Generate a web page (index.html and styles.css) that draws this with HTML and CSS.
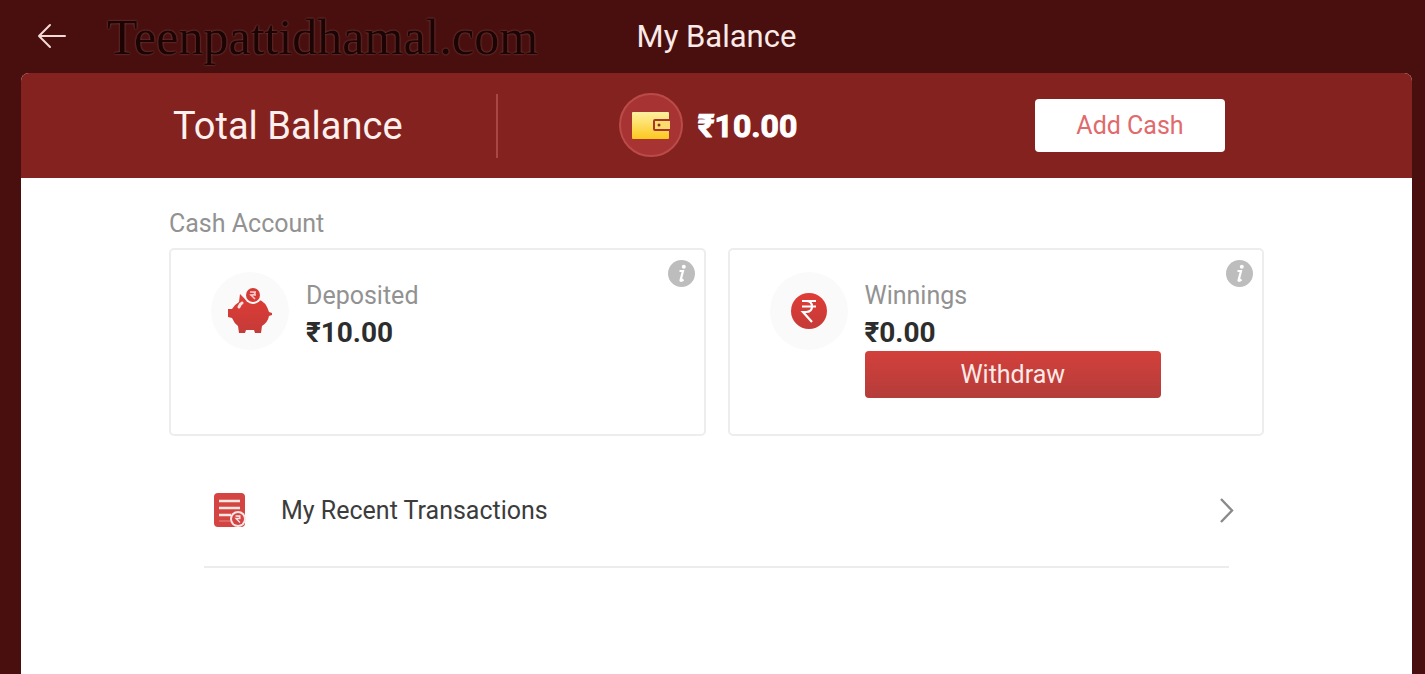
FILE: index.html
```html
<!DOCTYPE html>
<html lang="en">
<head>
    <meta charset="UTF-8">
    <meta name="viewport" content="width=device-width, initial-scale=1.0">
    <title>My Balance</title>
    <link rel="stylesheet" href="styles.css">
</head>
<body>
    <header class="topbar">
        <div class="topbar-left">
            <button class="back" type="button" aria-label="Back">
                <svg width="30" height="28" viewBox="0 0 30 28" fill="none" stroke="#f3d9d6" stroke-width="2" stroke-linecap="round" stroke-linejoin="round">
                    <path d="M28 13H2M13 2L2 13l11 11"/>
                </svg>
            </button>
            <span class="site">Teenpattidhamal.com</span>
        </div>
        <h1>My Balance</h1>
    </header>

    <main class="panel">
        <section class="total">
            <h2 class="total-label">Total Balance</h2>
            <div class="total-amount">
                <svg width="66" height="66" viewBox="0 0 66 66">
                    <defs>
                        <linearGradient id="gold" x1="0" y1="0" x2="0" y2="1">
                            <stop offset="0" stop-color="#fff0a0"/>
                            <stop offset="1" stop-color="#fcc81e"/>
                        </linearGradient>
                    </defs>
                    <circle cx="33" cy="32" r="31" fill="#a73332" stroke="#bb4b49" stroke-width="2"/>
                    <path d="M15 19h35a1 1 0 0 1 1 1v6H37a2 2 0 0 0-2 2v8a2 2 0 0 0 2 2h14v7a1 1 0 0 1-1 1H15a1 1 0 0 1-1-1V20a1 1 0 0 1 1-1z" fill="url(#gold)"/>
                    <path d="M37 28h15v8H37z" fill="#fddc6e"/>
                    <circle cx="41" cy="32" r="1.500" fill="#8c3422"/>
                </svg>
                <span>₹10.00</span>
            </div>
            <button class="add-cash" type="button">Add Cash</button>
        </section>

        <section class="content">
            <h3>Cash Account</h3>
            <div class="cards">
                <article class="card">
                    <div class="card-icon">
                        <svg width="46" height="48" viewBox="0 0 46 48">
                            <defs>
                                <linearGradient id="red" x1="0" y1="0" x2="0" y2="1">
                                    <stop offset="0" stop-color="#e03c36"/>
                                    <stop offset="1" stop-color="#c43b38"/>
                                </linearGradient>
                            </defs>
                            <path d="M13 7l6 6q3-1 8-1 9 0 13 8 1 2 2 5l3 1v2l-3 1q-1 6-7 10l-1 7h-6l-1-3h-8l-1 3h-6l-1-7q-4-3-6-8l-4-1v-8h4q2-4 7-7z" fill="url(#red)"/>
                            <circle cx="26" cy="8" r="9" fill="#fafafa"/>
                            <circle cx="26" cy="8" r="7" fill="#d43b37"/>
                            <path d="M23 5h6M23 8h6M24 5q4 0 4 1.500T24 8l4 4" fill="none" stroke="#f7c9c7" stroke-width="1.500"/>
                            <path d="M12 20q1-3 3-4" fill="none" stroke="#fbe3e2" stroke-width="3" stroke-linecap="round"/>
                        </svg>
                    </div>
                    <div class="card-body">
                        <p class="label">Deposited</p>
                        <p class="amount">₹10.00</p>
                    </div>
                    <button class="info" type="button" aria-label="About deposited cash">
                        <svg width="27" height="27" viewBox="0 0 27 27">
                            <circle cx="13.500" cy="13.500" r="13.500" fill="#bdbdbd"/>
                            <circle cx="15.800" cy="6.800" r="2" fill="#fff"/>
                            <path d="M11.500 11h3.500l-2.500 9.500q0 1 3-1" fill="none" stroke="#fff" stroke-width="2.200"/>
                        </svg>
                    </button>
                </article>

                <article class="card">
                    <div class="card-icon">
                        <svg width="36" height="36" viewBox="0 0 36 36">
                            <circle cx="18" cy="18" r="18" fill="url(#red)"/>
                            <path d="M11 8h14M11 13.500h14M12 8h3q6 0 6 5.500T15 19h-3l9 10" fill="none" stroke="#fff" stroke-width="2.200"/>
                        </svg>
                    </div>
                    <div class="card-body">
                        <p class="label">Winnings</p>
                        <p class="amount">₹0.00</p>
                        <button class="withdraw" type="button">Withdraw</button>
                    </div>
                    <button class="info" type="button" aria-label="About winnings">
                        <svg width="27" height="27" viewBox="0 0 27 27">
                            <circle cx="13.500" cy="13.500" r="13.500" fill="#bdbdbd"/>
                            <circle cx="15.800" cy="6.800" r="2" fill="#fff"/>
                            <path d="M11.500 11h3.500l-2.500 9.500q0 1 3-1" fill="none" stroke="#fff" stroke-width="2.200"/>
                        </svg>
                    </button>
                </article>
            </div>

            <a class="transactions" href="#">
                <svg width="32" height="36" viewBox="0 0 32 36">
                    <rect x="0" y="1" width="31" height="34" rx="4" fill="#d34442"/>
                    <path d="M5 9h21M5 16h21M5 23h12" fill="none" stroke="#fbe6e5" stroke-width="2.600"/>
                    <path d="M5 29h11" fill="none" stroke="#e58a88" stroke-width="1"/>
                    <circle cx="24" cy="27" r="8" fill="#fbe6e5"/>
                    <circle cx="24" cy="27" r="6" fill="#d34442"/>
                    <path d="M21.500 24h5M21.500 26.500h5M22 24q4 0 4 1.300T22 26.500l4 4" fill="none" stroke="#fbe6e5" stroke-width="1.300"/>
                </svg>
                <span>My Recent Transactions</span>
                <svg class="chevron" width="16" height="28" viewBox="0 0 16 28" fill="none" stroke="#8a8a8a" stroke-width="2.400">
                    <path d="M2 3l11 11.500L2 26"/>
                </svg>
            </a>
        </section>
    </main>
</body>
</html>
```

FILE: styles.css
```css
* {
    box-sizing: border-box;
}
body {
    display: flex;
    flex-direction: column;
    min-height: 100vh;
    margin: 0;
    padding: 0 13px 0 21px;
    background-color: #480f0e;
    font-family: Roboto, sans-serif;
    font-size: 25px;
}
h1, h2, h3, p {
    margin: 0;
    font-weight: 400;
}
button {
    border: none;
    padding: 0;
    font-family: inherit;
    font-size: inherit;
    cursor: pointer;
}
svg {
    display: block;
    flex: none;
}
.topbar {
    display: grid;
    grid-template-columns: 1fr auto 1fr;
    align-items: center;
    height: 73px;
}
.topbar-left {
    display: flex;
    align-items: center;
    gap: 40px;
    padding-left: 16px;
}
.back {
    background: none;
}
.site {
    font-family: "Liberation Serif", serif;
    font-size: 50px;
    line-height: 72px;
    color: #1c0404;
    text-shadow: 0 0 2px #8a5a55;
}
h1 {
    font-size: 31px;
    color: #fbeae8;
}
.panel {
    flex: 1;
    background-color: #fff;
    border-radius: 8px 8px 0 0;
}
.total {
    display: grid;
    grid-template-columns: 30fr 38fr 32fr;
    align-items: center;
    height: 105px;
    padding: 0 148px;
    border-radius: 8px 8px 0 0;
    background-color: #84221f;
}
.total-label {
    padding-left: 4px;
    border-right: 2px solid #a84744;
    font-size: 38px;
    line-height: 64px;
    color: #fff0ee;
}
.total-amount {
    display: flex;
    align-items: center;
    justify-content: center;
    gap: 14px;
    padding-left: 4px;
    font-size: 32px;
    font-weight: 700;
    color: #fff;
    -webkit-text-stroke: 1px #fff;
}
.add-cash {
    justify-self: end;
    width: 190px;
    height: 53px;
    margin-right: 39px;
    border-radius: 4px;
    background-color: #fff;
    color: #e06a6c;
}
.content {
    padding: 28px 148px;
}
h3 {
    font-size: 25px;
    line-height: 36px;
    margin-bottom: 6px;
    color: #929292;
}
.cards {
    display: grid;
    grid-template-columns: 1fr 1fr;
    gap: 22px;
}
.card {
    position: relative;
    display: flex;
    gap: 17px;
    min-height: 188px;
    padding: 22px 101px 23px 40px;
    border: 2px solid #ededed;
    border-radius: 5px;
}
.card-icon {
    display: flex;
    flex: none;
    align-items: center;
    justify-content: center;
    width: 78px;
    height: 78px;
    border-radius: 50%;
    background-color: #fafafa;
}
.card-body {
    flex: 1;
    padding-top: 5px;
}
.label {
    line-height: 38px;
    color: #929292;
}
.amount {
    font-size: 28px;
    font-weight: 700;
    line-height: 36px;
    color: #2d2d2d;
}
.info {
    position: absolute;
    top: 10px;
    right: 9px;
    background: none;
}
.withdraw {
    width: 100%;
    height: 47px;
    border-radius: 4px;
    background: linear-gradient(#d3403b, #b43c3a);
    color: #fdeae6;
}
.transactions {
    display: flex;
    align-items: center;
    gap: 35px;
    height: 114px;
    margin: 18px 35px 0;
    padding: 0 0 0 10px;
    border-bottom: 2px solid #ececec;
    color: #3c3c3c;
    text-decoration: none;
}
.chevron {
    margin-left: auto;
    margin-right: -6px;
}
```
